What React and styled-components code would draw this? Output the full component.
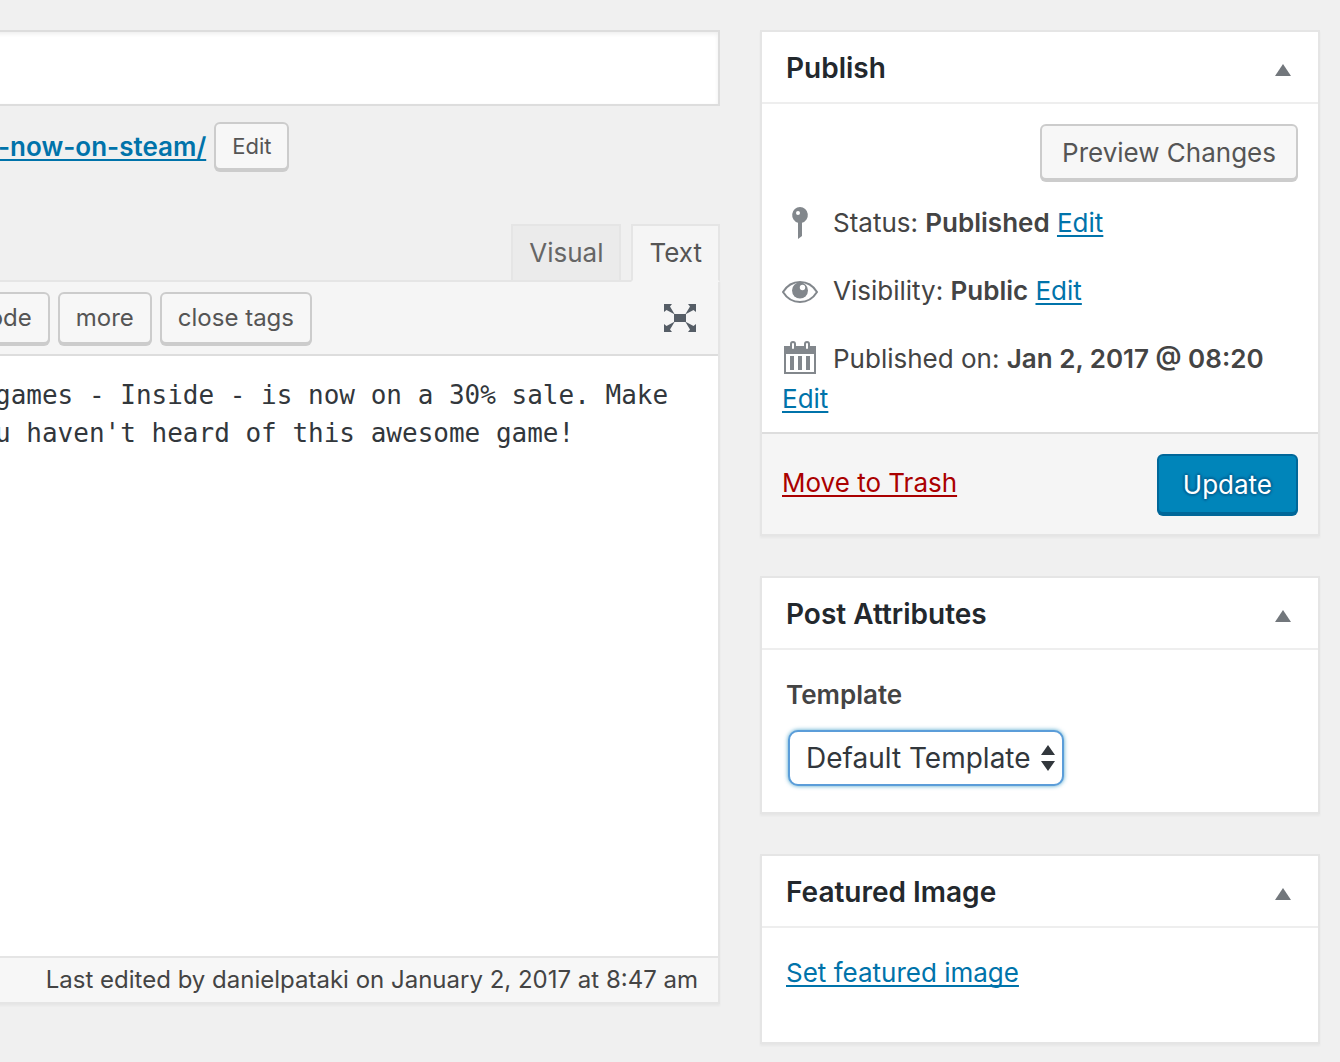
import React, { useState } from "react";
import styled, { createGlobalStyle, css } from "styled-components";

const GlobalStyle = createGlobalStyle`
  *, *::before, *::after { box-sizing: border-box; }
  body {
    margin: 0;
    background: #f0f0f0;
    color: #444;
    font: 400 26px/40px Inter, "Liberation Sans", sans-serif;
  }
  button, input, textarea, select { font: inherit; color: inherit; margin: 0; }
`;

const Page = styled.div`
  display: grid;
  grid-template-columns: minmax(0, 1fr) 560px;
  column-gap: 40px;
  align-items: start;
  padding: 30px 20px 18px 0;
  overflow: hidden;
`;

const Main = styled.main`
  min-width: 0;
  margin-left: -45px;
`;

const TitleInput = styled.input`
  display: block;
  width: 100%;
  height: 76px;
  padding: 6px 16px;
  border: 2px solid #ddd;
  outline: none;
  background: #fff;
  box-shadow: inset 0 2px 4px rgba(0, 0, 0, 0.07);
  font-size: 34px;
`;

const Permalink = styled.div`
  display: flex;
  align-items: center;
  gap: 8px;
  padding: 16px 0 0 43px;
`;

const Link = styled.a`
  color: ${(p) => (p.$danger ? "#a00" : "#0073aa")};
  font-weight: ${(p) => (p.$strong ? 600 : 400)};
  text-decoration: underline;
  text-decoration-thickness: 2px;
  text-underline-offset: 3px;
  text-decoration-skip-ink: none;
`;

const sizes = {
  small: css`
    height: 48px;
    padding: 0 16px;
    font-size: 22px;
  `,
  toolbar: css`
    height: 52px;
    padding: 0 16px;
    font-size: 24px;
  `,
  regular: css`
    height: 56px;
    padding: 2px 20px 0;
  `,
  large: css`
    height: 60px;
    padding: 2px 24px 0;
  `,
};

const Button = styled.button`
  flex: none;
  border: 2px solid ${(p) => (p.$primary ? "#006799" : "#ccc")};
  border-radius: 6px;
  background: ${(p) => (p.$primary ? "#0085ba" : "#f7f7f7")};
  color: ${(p) => (p.$primary ? "#fff" : "#555")};
  box-shadow: 0 2px 0 ${(p) => (p.$primary ? "#006799" : "#ccc")};
  margin-bottom: 2px;
  line-height: 1;
  cursor: pointer;
  ${(p) => p.$primary && "text-shadow: 0 -2px 2px #006799, 2px 0 2px #006799, 0 2px 2px #006799, -2px 0 2px #006799;"}
  ${(p) => sizes[p.$size]}
`;

const Tabs = styled.div`
  display: flex;
  justify-content: flex-end;
  gap: 10px;
  margin-top: 52px;
`;

const Tab = styled.button`
  height: 58px;
  padding: 0 16px;
  border: 2px solid #e5e5e5;
  border-bottom-color: ${(p) => (p.$active ? "#f5f5f5" : "#e5e5e5")};
  background: ${(p) => (p.$active ? "#f5f5f5" : "#ebebeb")};
  color: ${(p) => (p.$active ? "#555" : "#666")};
  margin-bottom: -2px;
  position: relative;
  cursor: pointer;
`;

const Editor = styled.section`
  border: 2px solid #e5e5e5;
  background: #fff;
  box-shadow: 0 2px 2px rgba(0, 0, 0, 0.04);
`;

const Toolbar = styled.div`
  display: flex;
  align-items: center;
  gap: 8px;
  padding: 10px 22px 8px 0;
  border-bottom: 2px solid #ddd;
  background: #f5f5f5;
`;

const IconButton = styled.button`
  display: flex;
  margin-left: auto;
  padding: 0 0 2px;
  border: 0;
  background: none;
  cursor: pointer;
`;

const Content = styled.textarea`
  display: block;
  width: 100%;
  height: 600px;
  padding: 20px 0 20px 38px;
  border: 0;
  outline: none;
  resize: none;
  background: #fff;
  color: #32373c;
  font: 26px/38px "DejaVu Sans Mono", monospace;
`;

const EditorFooter = styled.footer`
  padding: 2px 20px;
  border-top: 2px solid #e5e5e5;
  background: #f7f7f7;
  font-size: 24px;
  text-align: right;
`;

const Sidebar = styled.aside`
  display: flex;
  flex-direction: column;
  gap: 40px;
`;

const Card = styled.section`
  border: 2px solid #e5e5e5;
  background: #fff;
  box-shadow: 0 2px 2px rgba(0, 0, 0, 0.04);
`;

const CardHeader = styled.header`
  display: flex;
  align-items: center;
  justify-content: space-between;
  height: 72px;
  padding: 2px 27px 0 24px;
  border-bottom: 2px solid #eee;
`;

const CardTitle = styled.h2`
  margin: 0;
  color: #23282d;
  font-size: 28px;
  font-weight: 600;
`;

const Toggle = styled.button`
  display: flex;
  padding: 4px 0 0;
  border: 0;
  background: none;
  cursor: pointer;
`;

const CardBody = styled.div`
  padding: 25px 24px ${(p) => p.$bottom}px;
`;

const PreviewRow = styled.div`
  display: flex;
  justify-content: flex-end;
  padding: 20px 20px 0;
`;

const StatusList = styled.ul`
  display: flex;
  flex-direction: column;
  gap: 28px;
  margin: 0;
  padding: 21px 20px 13px;
  list-style: none;

  svg {
    display: inline-block;
    vertical-align: middle;
    margin: -4px 15px 0 0;
  }
`;

const StatusItem = styled.li`
  line-height: 40px;

  b { font-weight: 600; }
`;

const PublishFooter = styled.footer`
  display: flex;
  align-items: flex-start;
  justify-content: space-between;
  padding: 20px 20px 18px;
  border-top: 2px solid #ddd;
  background: #f5f5f5;
  line-height: 58px;
`;

const Label = styled.label`
  display: block;
  margin-bottom: 15px;
  font-weight: 600;
`;

const SelectBox = styled.div`
  position: relative;
  width: fit-content;
  margin-left: 2px;

  svg {
    position: absolute;
    top: 15px;
    right: 9px;
    pointer-events: none;
  }
`;

const Select = styled.select`
  display: block;
  height: 56px;
  padding: 0 31px 0 16px;
  appearance: none;
  border: 2px solid #5b9dd9;
  border-radius: 10px;
  outline: none;
  background: #fff;
  color: #32373c;
  box-shadow: 0 0 4px rgba(30, 140, 190, 0.8);
  font-size: 28px;
`;

const FullscreenIcon = () => (
  <svg width="32" height="28" viewBox="0 0 32 28" fill="#555d66" aria-hidden="true">
    <path d="M10 10h12v8H10z" />
    <path d="M0 0h8L6 2.500 10.500 10H10L2.500 6 0 8z" />
    <path d="M32 0h-8l2 2.500L21.500 10h.5l7.500-4L32 8z" />
    <path d="M0 28h8l-2-2.500L10.500 18H10l-7.500 4L0 20z" />
    <path d="M32 28h-8l2-2.500L21.500 18h.5l7.500 4 2.500-2z" />
  </svg>
);

const PinIcon = () => (
  <svg width="36" height="36" viewBox="0 0 36 36" fill="#82878c" aria-hidden="true">
    <path fillRule="evenodd" d="M18 2a8 8 0 0 1 2 15.700V31l-4 3V17.700A8 8 0 0 1 18 2zm-2 4a2 2 0 1 0 0 4 2 2 0 0 0 0-4z" />
  </svg>
);

const EyeIcon = () => (
  <svg width="36" height="36" viewBox="0 0 36 36" aria-hidden="true">
    <path d="M1 19C5 12.500 11 9 18 9s13 3.500 17 10c-4 6.500-10 10-17 10S5 25.500 1 19z" fill="#fff" stroke="#82878c" strokeWidth="2" />
    <circle cx="18" cy="17.500" r="8" fill="#82878c" />
    <circle cx="20.500" cy="14.500" r="2.700" fill="#fff" />
  </svg>
);

const CalendarIcon = () => (
  <svg width="36" height="36" viewBox="0 0 36 36" fill="#82878c" aria-hidden="true">
    <path fillRule="evenodd" d="M2 5h32v28H2zM4 13v18h28V13z" />
    <path d="M8 15h4v14H8zM16 15h4v14h-4zM24 15h4v14h-4z" />
    <rect x="9" y="1" width="4" height="8" rx="2" fill="#fff" stroke="#82878c" strokeWidth="2" />
    <rect x="23" y="1" width="4" height="8" rx="2" fill="#fff" stroke="#82878c" strokeWidth="2" />
  </svg>
);

const Panel = ({ title, children }) => (
  <Card>
    <CardHeader>
      <CardTitle>{title}</CardTitle>
      <Toggle type="button" aria-label={`Toggle panel: ${title}`}>
        <svg width="16" height="12" viewBox="0 0 16 12" fill="#72777c" aria-hidden="true">
          <path d="M8 0l8 12H0z" />
        </svg>
      </Toggle>
    </CardHeader>
    {children}
  </Card>
);

export default function App() {
  const [title, setTitle] = useState("");
  const [content, setContent] = useState(
    "games - Inside - is now on a 30% sale. Make\nu haven't heard of this awesome game!"
  );

  return (
    <>
      <GlobalStyle />
      <Page>
        <Main>
          <TitleInput aria-label="Title" value={title} onChange={(e) => setTitle(e.target.value)} />
          <Permalink>
            <Link href="#permalink" $strong>-now-on-steam/</Link>
            <Button type="button" $size="small">Edit</Button>
          </Permalink>
          <Tabs>
            <Tab type="button">Visual</Tab>
            <Tab type="button" $active>Text</Tab>
          </Tabs>
          <Editor>
            <Toolbar>
              <Button type="button" $size="toolbar">code</Button>
              <Button type="button" $size="toolbar">more</Button>
              <Button type="button" $size="toolbar">close tags</Button>
              <IconButton type="button" aria-label="Fullscreen">
                <FullscreenIcon />
              </IconButton>
            </Toolbar>
            <Content
              aria-label="Post content"
              spellCheck={false}
              value={content}
              onChange={(e) => setContent(e.target.value)}
            />
            <EditorFooter>Last edited by danielpataki on January 2, 2017 at 8:47 am</EditorFooter>
          </Editor>
        </Main>

        <Sidebar>
          <Panel title="Publish">
            <PreviewRow>
              <Button type="button" $size="regular">Preview Changes</Button>
            </PreviewRow>
            <StatusList>
              <StatusItem>
                <PinIcon />
                Status: <b>Published</b> <Link href="#status">Edit</Link>
              </StatusItem>
              <StatusItem>
                <EyeIcon />
                Visibility: <b>Public</b> <Link href="#visibility">Edit</Link>
              </StatusItem>
              <StatusItem>
                <CalendarIcon />
                Published on: <b>Jan 2, 2017 @ 08:20</b> <Link href="#date">Edit</Link>
              </StatusItem>
            </StatusList>
            <PublishFooter>
              <Link href="#trash" $danger>Move to Trash</Link>
              <Button type="submit" $primary $size="large">Update</Button>
            </PublishFooter>
          </Panel>

          <Panel title="Post Attributes">
            <CardBody $bottom={26}>
              <Label htmlFor="template">Template</Label>
              <SelectBox>
                <Select id="template" defaultValue="default">
                  <option value="default">Default Template</option>
                </Select>
                <svg width="14" height="26" viewBox="0 0 14 26" fill="#32373c" aria-hidden="true">
                  <path d="M7 0l7 10H0zM7 26L0 16h14z" />
                </svg>
              </SelectBox>
            </CardBody>
          </Panel>

          <Panel title="Featured Image">
            <CardBody $bottom={49}>
              <Link href="#featured-image">Set featured image</Link>
            </CardBody>
          </Panel>
        </Sidebar>
      </Page>
    </>
  );
}
